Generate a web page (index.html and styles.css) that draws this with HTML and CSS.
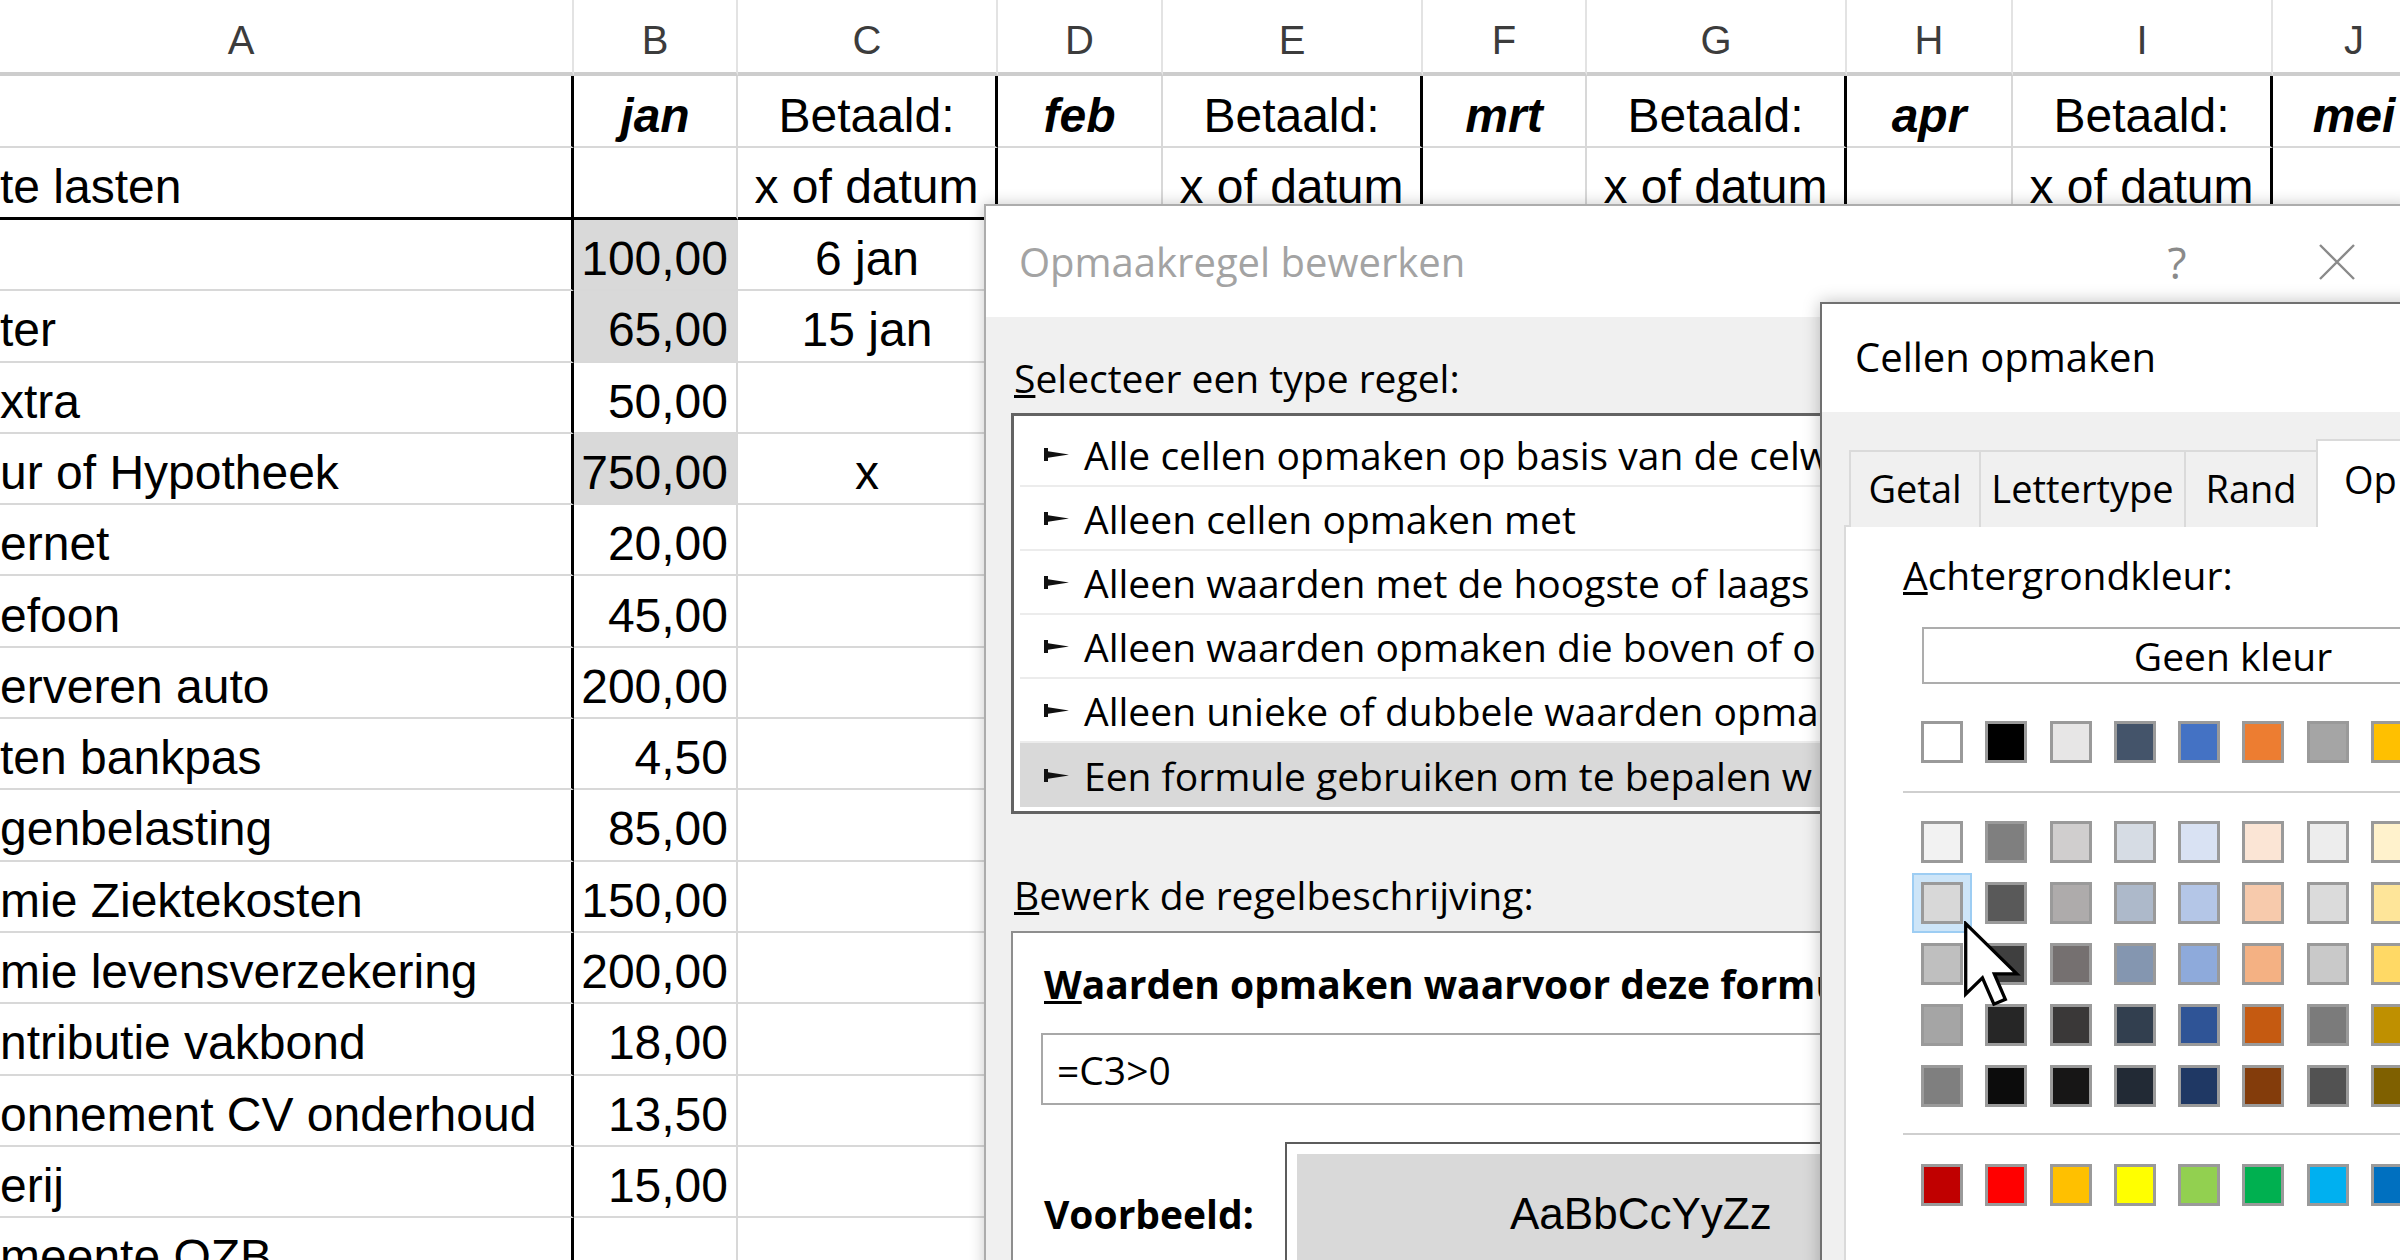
FILE: index.html
```html
<!DOCTYPE html>
<html lang="nl">
<head>
<meta charset="utf-8">
<title>Opmaakregel bewerken</title>
<link rel="stylesheet" href="styles.css">
</head>
<body>
<div class="sheet">
  <div class="c h">A</div><div class="c h">B</div><div class="c h">C</div><div class="c h">D</div><div class="c h">E</div><div class="c h">F</div><div class="c h">G</div><div class="c h">H</div><div class="c h">I</div><div class="c h">J</div>

  <div class="c a kr"></div><div class="c ctr mon">jan</div><div class="c ctr kr">Betaald:</div><div class="c ctr mon">feb</div><div class="c ctr kr">Betaald:</div><div class="c ctr mon">mrt</div><div class="c ctr kr">Betaald:</div><div class="c ctr mon">apr</div><div class="c ctr kr">Betaald:</div><div class="c ctr mon">mei</div>

  <div class="c a kr kb">te lasten</div><div class="c kb"></div><div class="c ctr kr kb">x of datum</div><div class="c kb"></div><div class="c ctr kr kb">x of datum</div><div class="c kb"></div><div class="c ctr kr kb">x of datum</div><div class="c kb"></div><div class="c ctr kr kb">x of datum</div><div class="c kb"></div>

  <div class="c a kr"></div><div class="c num fill">100,00</div><div class="c ctr">6 jan</div><div class="c rest"></div>
  <div class="c a kr">ter</div><div class="c num fill">65,00</div><div class="c ctr">15 jan</div><div class="c rest"></div>
  <div class="c a kr">xtra</div><div class="c num">50,00</div><div class="c ctr"></div><div class="c rest"></div>
  <div class="c a kr">ur of Hypotheek</div><div class="c num fill">750,00</div><div class="c ctr">x</div><div class="c rest"></div>
  <div class="c a kr">ernet</div><div class="c num">20,00</div><div class="c ctr"></div><div class="c rest"></div>
  <div class="c a kr">efoon</div><div class="c num">45,00</div><div class="c ctr"></div><div class="c rest"></div>
  <div class="c a kr">erveren auto</div><div class="c num">200,00</div><div class="c ctr"></div><div class="c rest"></div>
  <div class="c a kr">ten bankpas</div><div class="c num">4,50</div><div class="c ctr"></div><div class="c rest"></div>
  <div class="c a kr">genbelasting</div><div class="c num">85,00</div><div class="c ctr"></div><div class="c rest"></div>
  <div class="c a kr">mie Ziektekosten</div><div class="c num">150,00</div><div class="c ctr"></div><div class="c rest"></div>
  <div class="c a kr">mie levensverzekering</div><div class="c num">200,00</div><div class="c ctr"></div><div class="c rest"></div>
  <div class="c a kr">ntributie vakbond</div><div class="c num">18,00</div><div class="c ctr"></div><div class="c rest"></div>
  <div class="c a kr">onnement CV onderhoud</div><div class="c num">13,50</div><div class="c ctr"></div><div class="c rest"></div>
  <div class="c a kr">erij</div><div class="c num">15,00</div><div class="c ctr"></div><div class="c rest"></div>
  <div class="c a kr">meente OZB</div><div class="c num"></div><div class="c ctr"></div><div class="c rest"></div>
</div>

<div class="dlg dlg1">
  <div class="titlebar">
    <span class="title1">Opmaakregel bewerken</span>
    <span class="help">?</span>
    <span class="close"><svg width="38" height="38" viewBox="0 0 38 38"><path d="M2 2 L36 36 M36 2 L2 36" stroke="#8a8a8a" stroke-width="2.4" fill="none"/></svg></span>
  </div>
  <div class="body1">
    <div class="lbl lbl-sel"><u>S</u>electeer een type regel:</div>
    <div class="listbox">
      <div class="item"><svg class="arr" width="25" height="15" viewBox="0 0 25 15"><path d="M0 1 H4 V4.2 L25 7.5 L4 10.8 V14 H0 Z" fill="#111"/></svg><span>Alle cellen opmaken op basis van de celw</span></div>
      <div class="item"><svg class="arr" width="25" height="15" viewBox="0 0 25 15"><path d="M0 1 H4 V4.2 L25 7.5 L4 10.8 V14 H0 Z" fill="#111"/></svg><span>Alleen cellen opmaken met</span></div>
      <div class="item"><svg class="arr" width="25" height="15" viewBox="0 0 25 15"><path d="M0 1 H4 V4.2 L25 7.5 L4 10.8 V14 H0 Z" fill="#111"/></svg><span>Alleen waarden met de hoogste of laags</span></div>
      <div class="item"><svg class="arr" width="25" height="15" viewBox="0 0 25 15"><path d="M0 1 H4 V4.2 L25 7.5 L4 10.8 V14 H0 Z" fill="#111"/></svg><span>Alleen waarden opmaken die boven of o</span></div>
      <div class="item"><svg class="arr" width="25" height="15" viewBox="0 0 25 15"><path d="M0 1 H4 V4.2 L25 7.5 L4 10.8 V14 H0 Z" fill="#111"/></svg><span>Alleen unieke of dubbele waarden opma</span></div>
      <div class="item sel"><svg class="arr" width="25" height="15" viewBox="0 0 25 15"><path d="M0 1 H4 V4.2 L25 7.5 L4 10.8 V14 H0 Z" fill="#111"/></svg><span>Een formule gebruiken om te bepalen w</span></div>
    </div>
    <div class="lbl lbl-desc"><u>B</u>ewerk de regelbeschrijving:</div>
    <div class="desc">
      <div class="blbl"><u>W</u>aarden opmaken waarvoor deze formul</div>
      <div class="formula">=C3&gt;0</div>
      <div class="pv-row">
        <div class="blbl pv-lbl">Voorbeeld:</div>
        <div class="pv-box"><div class="pv-inner">AaBbCcYyZz</div></div>
      </div>
    </div>
  </div>
</div>

<div class="dlg dlg2">
  <div class="titlebar t2"><span class="title2">Cellen opmaken</span></div>
  <div class="tabs">
    <div class="tab tab-getal">Getal</div>
    <div class="tab tab-letter">Lettertype</div>
    <div class="tab tab-rand">Rand</div>
    <div class="tab tab-on">Op</div>
  </div>
  <div class="tabpanel">
    <div class="lbl lbl-bg"><u>A</u>chtergrondkleur:</div>
    <div class="nocolor">Geen kleur</div>
    <div class="sw-row first">
      <span class="sw" style="background:#ffffff"></span><span class="sw" style="background:#000000"></span><span class="sw" style="background:#e7e6e6"></span><span class="sw" style="background:#44546a"></span><span class="sw" style="background:#4472c4"></span><span class="sw" style="background:#ed7d31"></span><span class="sw" style="background:#a5a5a5"></span><span class="sw" style="background:#ffc000"></span><span class="sw" style="background:#5b9bd5"></span>
    </div>
    <div class="sep"></div>
    <div class="tints">
      <div class="sw-row">
        <span class="sw" style="background:#f2f2f2"></span><span class="sw" style="background:#7f7f7f"></span><span class="sw" style="background:#d0cece"></span><span class="sw" style="background:#d6dce4"></span><span class="sw" style="background:#d9e2f3"></span><span class="sw" style="background:#fbe5d5"></span><span class="sw" style="background:#ededed"></span><span class="sw" style="background:#fff2cc"></span><span class="sw" style="background:#deebf6"></span>
      </div>
      <div class="sw-row">
        <span class="sw sel" style="background:#d8d8d8"></span><span class="sw" style="background:#595959"></span><span class="sw" style="background:#aeabab"></span><span class="sw" style="background:#adb9ca"></span><span class="sw" style="background:#b4c6e7"></span><span class="sw" style="background:#f7caac"></span><span class="sw" style="background:#dbdbdb"></span><span class="sw" style="background:#fee599"></span><span class="sw" style="background:#bdd7ee"></span>
      </div>
      <div class="sw-row">
        <span class="sw" style="background:#bfbfbf"></span><span class="sw" style="background:#3f3f3f"></span><span class="sw" style="background:#757070"></span><span class="sw" style="background:#8496b0"></span><span class="sw" style="background:#8eaadb"></span><span class="sw" style="background:#f4b183"></span><span class="sw" style="background:#c9c9c9"></span><span class="sw" style="background:#ffd965"></span><span class="sw" style="background:#9cc3e5"></span>
      </div>
      <div class="sw-row">
        <span class="sw" style="background:#a5a5a5"></span><span class="sw" style="background:#262626"></span><span class="sw" style="background:#3a3838"></span><span class="sw" style="background:#323f4f"></span><span class="sw" style="background:#2f5496"></span><span class="sw" style="background:#c55a11"></span><span class="sw" style="background:#7b7b7b"></span><span class="sw" style="background:#bf9000"></span><span class="sw" style="background:#2e75b5"></span>
      </div>
      <div class="sw-row">
        <span class="sw" style="background:#7f7f7f"></span><span class="sw" style="background:#0c0c0c"></span><span class="sw" style="background:#171616"></span><span class="sw" style="background:#222a35"></span><span class="sw" style="background:#1f3864"></span><span class="sw" style="background:#833c0b"></span><span class="sw" style="background:#525252"></span><span class="sw" style="background:#7f6000"></span><span class="sw" style="background:#1e4e79"></span>
      </div>
    </div>
    <div class="sep sep2"></div>
    <div class="sw-row std">
      <span class="sw" style="background:#c00000"></span><span class="sw" style="background:#ff0000"></span><span class="sw" style="background:#ffc000"></span><span class="sw" style="background:#ffff00"></span><span class="sw" style="background:#92d050"></span><span class="sw" style="background:#00b050"></span><span class="sw" style="background:#00b0f0"></span><span class="sw" style="background:#0070c0"></span><span class="sw" style="background:#002060"></span>
    </div>
  </div>
</div>

<svg class="cursor" width="60" height="92" viewBox="0 0 13.6 20.9"><path d="M0.6 0.6 V16.6 L4.4 12.9 L7 18.9 L9.6 17.8 L7.1 12 H12.2 Z" fill="#fff" stroke="#000" stroke-width="0.75" stroke-linejoin="miter"/></svg>
</body>
</html>
```

FILE: styles.css
```css
* { box-sizing: border-box; }
html, body { margin: 0; padding: 0; }
body {
  width: 2400px;
  height: 1260px;
  overflow: hidden;
  position: relative;
  background: #ffffff;
  font-family: "Liberation Sans", Arial, sans-serif;
  color: #000;
}

/* ---------- spreadsheet ---------- */
.sheet {
  display: grid;
  grid-template-columns: 664px 164px 260px 165px 260px 164px 260px 166px 260px 164px;
  grid-template-rows: 76px 72px 72px repeat(15, 71.3px);
  margin-left: -90px;
  width: 2527px;
}
.c {
  border-right: 2px solid #d8d8d8;
  border-bottom: 2px solid #d8d8d8;
  font-size: 48px;
  line-height: 1.15;
  display: flex;
  align-items: flex-end;
  padding: 0 8px 3px;
  white-space: nowrap;
  overflow: hidden;
}
.h {
  font-size: 40px;
  color: #3c3c3c;
  justify-content: center;
  align-items: center;
  padding: 8px 0 0;
  border-right: 2px solid #e3e3e3;
  border-bottom: 4px solid #cdcdcd;
}
.a { padding-left: 90px; }
.num { justify-content: flex-end; }
.ctr { justify-content: center; }
.mon { font-weight: bold; font-style: italic; }
.fill { background: #d9d9d9; }
.kr { border-right: 3px solid #000; }
.kb { border-bottom: 3px solid #000; }
.rest { grid-column: 4 / span 7; }

/* ---------- dialogs ---------- */
.dlg {
  position: absolute;
  font-family: "Open Sans", "Noto Sans", sans-serif;
  font-size: 39px;
  background: #f0f0f0;
}
.titlebar {
  background: #ffffff;
  display: flex;
  align-items: center;
}

.dlg1 {
  left: 984px;
  top: 204px;
  width: 1425px;
  height: 1120px;
  border: 2px solid #acacac;
  box-shadow: 0 0 14px rgba(0, 0, 0, 0.22);
}
.dlg1 .titlebar {
  height: 111px;
  padding-left: 33px;
}
.title1 { color: #a3a3a3; font-size: 40px; flex: 1; }
.help {
  width: 160px;
  text-align: center;
  padding-right: 20px;
  color: #8a8a8a;
  font-size: 44px;
}
.close {
  width: 140px;
  display: flex;
  justify-content: center;
  align-items: center;
}
.body1 { padding: 0 0 0 25px; }
.lbl { line-height: 48px; height: 48px; white-space: nowrap; }
.lbl-sel { margin-top: 37px; padding-left: 3px; }
.listbox {
  margin-top: 11px;
  width: 840px;
  height: 401px;
  background: #fff;
  border: 3px solid #636363;
  padding: 7px 6px 4px;
  overflow: hidden;
}
.item {
  height: 64px;
  display: flex;
  align-items: center;
  padding-left: 24px;
  border-bottom: 2px solid #ececec;
  white-space: nowrap;
  overflow: hidden;
}
.item:last-child { border-bottom: 0; }
.item.sel { background: #d9d9d9; }
.arr { flex: none; margin-right: 15px; }
.lbl-desc { margin-top: 57px; padding-left: 3px; }
.desc {
  margin-top: 12px;
  width: 840px;
  height: 420px;
  background: #fff;
  border: 2px solid #8e8e8e;
  padding-left: 31px;
  overflow: hidden;
}
.blbl {
  font-weight: 700;
  line-height: 48px;
  white-space: nowrap;
}
.desc > .blbl:first-child { margin-top: 27px; }
.formula {
  margin-top: 25px;
  margin-left: -3px;
  height: 72px;
  border: 2px solid #a8a8a8;
  padding-left: 14px;
  display: flex;
  align-items: center;
  background: #fff;
}
.pv-row {
  margin-top: 37px;
  display: flex;
  align-items: center;
}
.pv-lbl { width: 241px; flex: none; }
.pv-box {
  flex: none;
  width: 600px;
  border: 2px solid #5c5c5c;
  padding: 10px;
  background: #fff;
}
.pv-inner {
  height: 120px;
  background: #d9d9d9;
  display: flex;
  align-items: center;
  padding-left: 213px;
  font-family: "Liberation Sans", Arial, sans-serif;
  font-size: 44px;
  white-space: nowrap;
}

.dlg2 {
  left: 1820px;
  top: 302px;
  width: 700px;
  height: 1000px;
  border: 2px solid #707070;
  box-shadow: 0 0 16px rgba(0, 0, 0, 0.25);
}
.t2 {
  height: 108px;
  padding-left: 33px;
  padding-bottom: 4px;
}
.title2 { font-size: 40px; color: #000; }
.tabs {
  margin-top: 27px;
  padding-left: 27px;
  display: flex;
  align-items: flex-end;
  height: 88px;
  position: relative;
  z-index: 1;
}
.tab {
  flex: none;
  height: 77px;
  background: #f0f0f0;
  border: 2px solid #dadada;
  border-bottom: 0;
  display: flex;
  align-items: center;
  justify-content: center;
  white-space: nowrap;
  margin-right: -2px;
  padding-bottom: 4px;
  font-size: 38px;
}
.tab-getal { width: 132px; }
.tab-letter { width: 207px; }
.tab-rand { width: 134px; }
.tab-on {
  height: 88px;
  width: 300px;
  background: #fff;
  justify-content: flex-start;
  padding-left: 26px;
  padding-bottom: 10px;
}
.tabpanel {
  margin-top: -2px;
  margin-left: 22px;
  height: 800px;
  background: #fff;
  border: 2px solid #dadada;
  padding-top: 24px;
  padding-left: 57px;
}
.lbl-bg { margin: 0; }
.nocolor {
  margin-top: 28px;
  margin-left: 19px;
  width: 622px;
  height: 57px;
  border: 2px solid #adadad;
  background: #fff;
  display: flex;
  align-items: center;
  justify-content: center;
  white-space: nowrap;
}
.sw-row {
  display: flex;
  gap: 22.3px;
  margin-left: 18px;
}
.sw-row.first { margin-top: 37px; }
.sw {
  flex: none;
  width: 42px;
  height: 42px;
  border: 3px solid #9a9a9a;
}
.sw.sel {
  box-shadow: 0 0 0 7px #cde5f8, 0 0 0 9px #9dcdf3;
}
.sep {
  margin-top: 28px;
  height: 2px;
  background: #cfcfcf;
}
.sep2 { margin-top: 26px; }
.tints {
  margin-top: 28px;
  display: flex;
  flex-direction: column;
  gap: 19px;
}
.sw-row.std { margin-top: 29px; }

.cursor {
  position: absolute;
  left: 1963px;
  top: 921px;
}
```
